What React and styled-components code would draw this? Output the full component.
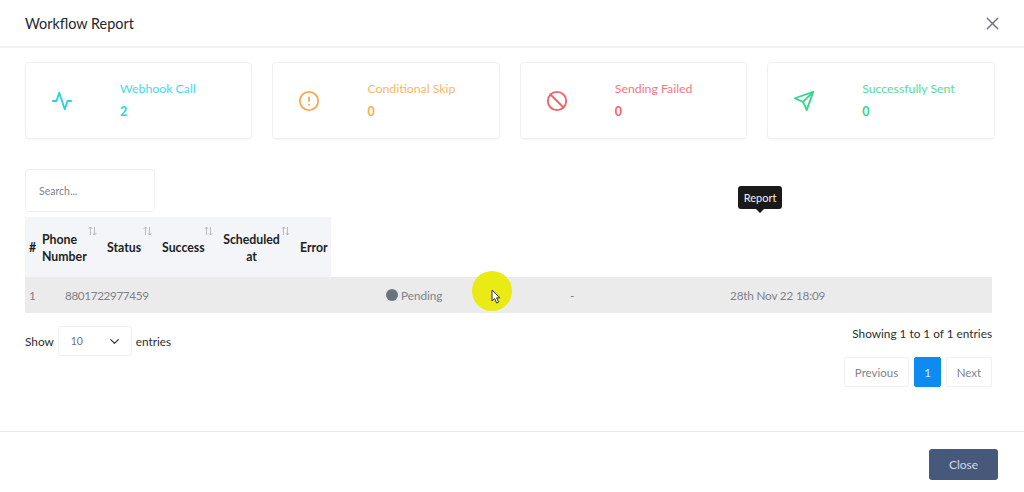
import styled, { createGlobalStyle } from 'styled-components'
import { ChevronDown, X } from 'lucide-react'

const GlobalStyle = createGlobalStyle`
  html, body {
    margin: 0;
    padding: 0;
    background: #fff;
    font-family: Lato, "Open Sans", sans-serif;
    color: #222;
  }
  * {
    box-sizing: border-box;
  }
`

const Modal = styled.div`
  width: 1024px;
  height: 492px;
  display: flex;
  flex-direction: column;
  overflow: hidden;
  position: relative;
`

const Header = styled.header`
  height: 48px;
  flex: none;
  display: flex;
  align-items: center;
  justify-content: space-between;
  padding: 0 21px 0 25px;
  border-bottom: 2px solid #f1f3f5;
`

const Title = styled.h2`
  margin: 0;
  font-size: 14.4px;
  font-weight: 400;
  color: #26262b;
`

const CloseIcon = styled(X)`
  color: #6f7378;
  display: block;
`

const Body = styled.main`
  flex: 1;
  padding: 14px 29px 0 25px;
  position: relative;
`

const Cards = styled.section`
  display: grid;
  grid-template-columns: repeat(4, 227.4px);
  column-gap: 20px;
`

const Card = styled.div`
  height: 77px;
  display: flex;
  align-items: center;
  border: 1px solid #eef0f2;
  border-radius: 4px;
  box-shadow: 0 1px 2px rgba(30, 40, 60, 0.04);
  color: ${(p) => p.$color};
`

const CardIcon = styled.div`
  width: 94px;
  flex: none;
  display: flex;
  padding-left: 25px;
`

const CardText = styled.div`
  display: flex;
  flex-direction: column;
  gap: 6px;
  margin-top: -2px;
`

const CardLabel = styled.div`
  font-size: 12.3px;
  line-height: 17px;
  opacity: 0.85;
`

const CardValue = styled.div`
  font-size: 12.5px;
  line-height: 17px;
  font-weight: 700;
`

const SearchBox = styled.div`
  width: 130px;
  height: 43px;
  margin-top: 30px;
  display: flex;
  align-items: center;
  padding-left: 13px;
  border: 1px solid #eef0f2;
  border-radius: 3px;
  font-size: 10.5px;
  color: #80858b;
`

const HeadTable = styled.div`
  width: 306px;
  height: 60px;
  margin-top: 5px;
  padding-top: 2px;
  display: flex;
  align-items: center;
  background: #f3f5f8;
`

const HeadCell = styled.div`
  position: relative;
  width: ${(p) => p.$width}px;
  flex: none;
  padding-left: ${(p) => p.$pad || 0}px;
  padding-right: ${(p) => (p.$center ? 20 : 0)}px;
  text-align: ${(p) => (p.$center ? 'center' : 'left')};
  font-size: 12.3px;
  line-height: 17.5px;
  font-weight: 700;
  color: #1d1f24;
  white-space: pre-line;
`

const SortMark = styled.svg`
  position: absolute;
  right: 10px;
  top: ${(p) => p.$top}px;
  color: #b0b4b9;
`

const Row = styled.div`
  width: 967px;
  height: 36px;
  display: grid;
  grid-template-columns: 36px 321px 184px 160px 1fr;
  align-items: center;
  padding-left: 4px;
  background: #ebebec;
  font-size: 11.7px;
  color: #7d8187;
`

const NumberCell = styled.span`
  letter-spacing: ${(p) => p.$tight}px;
`

const StatusCell = styled.div`
  display: flex;
  align-items: center;
  gap: 3px;
`

const Dot = styled.span`
  width: 12px;
  height: 12px;
  border-radius: 50%;
  background: #6b737c;
`

const TableFooter = styled.div`
  width: 967px;
  display: flex;
  justify-content: space-between;
  font-size: 11.8px;
  color: #2b2d31;
`

const Length = styled.div`
  display: flex;
  align-items: center;
  gap: 4px;
  margin-top: 13px;
  height: 30px;
`

const SelectBox = styled.div`
  width: 74px;
  height: 30px;
  display: flex;
  align-items: center;
  justify-content: space-between;
  padding: 0 9px 0 12px;
  border: 1px solid #eef0f2;
  border-radius: 3px;
  font-size: 10.5px;
  color: #6e7277;
`

const Info = styled.div`
  display: flex;
  flex-direction: column;
  align-items: flex-end;
  padding-top: 12px;
`

const InfoText = styled.div`
  line-height: 17px;
`

const Pager = styled.div`
  display: flex;
  gap: 5px;
  margin-top: 15px;
`

const PageButton = styled.div`
  width: ${(p) => p.$width}px;
  height: 30px;
  display: flex;
  align-items: center;
  justify-content: center;
  border: 1px solid ${(p) => (p.$active ? '#0d8bf0' : '#eef0f2')};
  border-radius: 2px;
  background: ${(p) => (p.$active ? '#0d8bf0' : '#fff')};
  color: ${(p) => (p.$active ? '#d5ebfc' : '#7f8489')};
  font-size: 11.5px;
`

const Tooltip = styled.div`
  position: absolute;
  left: 738px;
  top: 186px;
  width: 44px;
  height: 23px;
  display: flex;
  align-items: center;
  justify-content: center;
  border-radius: 3px;
  background: #1a1a1a;
  color: #f2f2f2;
  font-size: 11px;

  &::after {
    content: '';
    position: absolute;
    left: 18px;
    bottom: -4px;
    border-left: 4px solid transparent;
    border-right: 4px solid transparent;
    border-top: 4px solid #1a1a1a;
  }
`

const CursorMark = styled.div`
  position: absolute;
  left: 472px;
  top: 271px;
  width: 40px;
  height: 40px;
  border-radius: 50%;
  background: #eaea14;
`

const Pointer = styled.svg`
  position: absolute;
  left: 19px;
  top: 18px;
`

const Footer = styled.footer`
  position: absolute;
  left: 0;
  right: 0;
  bottom: 0;
  height: 61px;
  display: flex;
  justify-content: flex-end;
  padding: 17px 26px 0 0;
  border-top: 1px solid #e6e8ea;
`

const CloseButton = styled.button`
  width: 69px;
  height: 31px;
  border: none;
  border-radius: 3px;
  background: #47597a;
  color: #d3d9e3;
  font-family: inherit;
  font-size: 12px;
`

const StatIcon = ({ children }) => (
  <svg
    width="22"
    height="22"
    viewBox="0 0 24 24"
    fill="none"
    stroke="currentColor"
    strokeWidth="2"
    strokeLinecap="round"
    strokeLinejoin="round"
  >
    {children}
  </svg>
)

const stats = [
  {
    label: 'Webhook Call',
    value: 2,
    color: '#27d3e3',
    icon: <polyline points="22 12 18 12 15 21 9 3 6 12 2 12" />,
  },
  {
    label: 'Conditional Skip',
    value: 0,
    color: '#f8ab50',
    icon: (
      <>
        <circle cx="12" cy="12" r="10" />
        <line x1="12" y1="8" x2="12" y2="12" />
        <line x1="12" y1="16" x2="12.01" y2="16" />
      </>
    ),
  },
  {
    label: 'Sending Failed',
    value: 0,
    color: '#f5606c',
    icon: (
      <>
        <circle cx="12" cy="12" r="10" />
        <line x1="4.93" y1="4.93" x2="19.07" y2="19.07" />
      </>
    ),
  },
  {
    label: 'Successfully Sent',
    value: 0,
    color: '#36d58b',
    icon: (
      <>
        <line x1="22" y1="2" x2="11" y2="13" />
        <polygon points="22 2 15 22 11 13 2 9 22 2" />
      </>
    ),
  },
]

const SortIcon = ({ top }) => (
  <SortMark $top={top} width="9" height="10" viewBox="0 0 9 10" fill="none" stroke="currentColor" strokeWidth="0.9">
    <path d="M2.5 9V1M0.8 2.8 2.5 1l1.7 1.8M6.5 1v8M4.8 7.2 6.5 9l1.7-1.8" />
  </SortMark>
)

const App = () => {
  return (
    <Modal>
      <GlobalStyle />
      <Header>
        <Title>Workflow Report</Title>
        <CloseIcon size={21} strokeWidth={1.6} />
      </Header>
      <Body>
        <Cards>
          {stats.map((s) => (
            <Card key={s.label} $color={s.color}>
              <CardIcon>
                <StatIcon>{s.icon}</StatIcon>
              </CardIcon>
              <CardText>
                <CardLabel>{s.label}</CardLabel>
                <CardValue>{s.value}</CardValue>
              </CardText>
            </Card>
          ))}
        </Cards>
        <SearchBox>Search...</SearchBox>
        <HeadTable>
          <HeadCell $width={17} $pad={4}>#</HeadCell>
          <HeadCell $width={65}>
            {'Phone\nNumber'}
            <SortIcon top={-5} />
          </HeadCell>
          <HeadCell $width={55}>
            Status
            <SortIcon top={-13} />
          </HeadCell>
          <HeadCell $width={61}>
            Success
            <SortIcon top={-13} />
          </HeadCell>
          <HeadCell $width={77} $center>
            {'Scheduled\nat'}
            <SortIcon top={-5} />
          </HeadCell>
          <HeadCell $width={31}>Error</HeadCell>
        </HeadTable>
        <Row>
          <span>1</span>
          <NumberCell $tight={-0.35}>8801722977459</NumberCell>
          <StatusCell>
            <Dot />
            Pending
          </StatusCell>
          <span>-</span>
          <NumberCell $tight={-0.15}>28th Nov 22 18:09</NumberCell>
        </Row>
        <TableFooter>
          <Length>
            Show
            <SelectBox>
              10
              <ChevronDown size={15} strokeWidth={2} color="#33373d" />
            </SelectBox>
            entries
          </Length>
          <Info>
            <InfoText>Showing 1 to 1 of 1 entries</InfoText>
            <Pager>
              <PageButton $width={65}>Previous</PageButton>
              <PageButton $width={27} $active>1</PageButton>
              <PageButton $width={46}>Next</PageButton>
            </Pager>
          </Info>
        </TableFooter>
      </Body>
      <Footer>
        <CloseButton>Close</CloseButton>
      </Footer>
      <Tooltip>Report</Tooltip>
      <CursorMark>
        <Pointer width="10" height="15" viewBox="0 0 10 15">
          <path d="M1 1v11l2.6-2.4L5.6 14l2-.9-2-4.3H9z" fill="#fff" stroke="#333" strokeWidth="1" />
        </Pointer>
      </CursorMark>
    </Modal>
  )
}

export default App
